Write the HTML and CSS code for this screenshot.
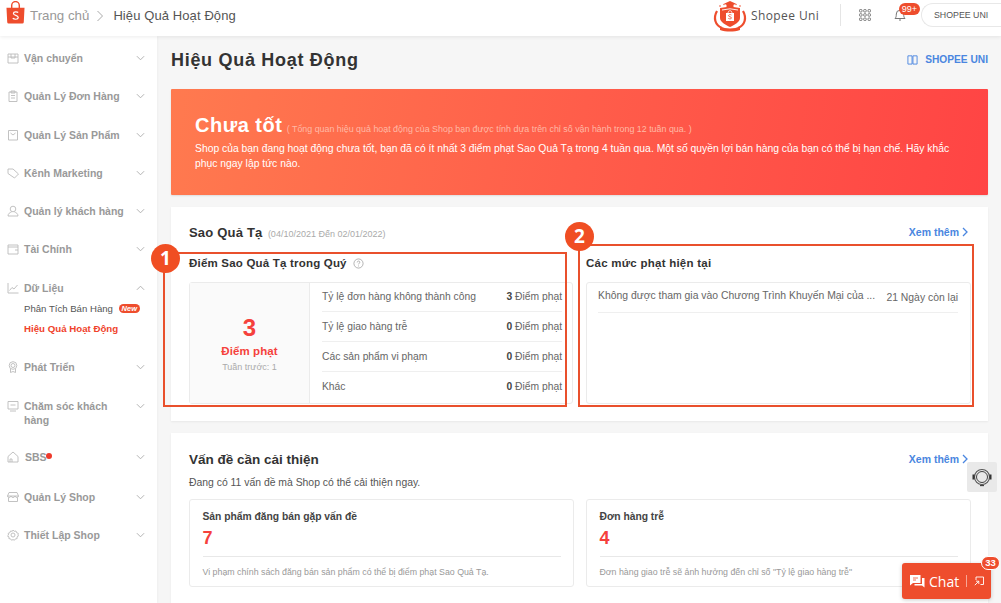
FILE: index.html
```html
<!DOCTYPE html>
<html lang="vi">
<head>
<meta charset="utf-8">
<title>Hiệu Quả Hoạt Động</title>
<link rel="stylesheet" href="styles.css">
</head>
<body>
<div class="app">
  <header class="topbar">
    <svg class="logo" viewBox="0 0 20 24"><path d="M.5 7h19l-.8 15.300a1.500 1.500 0 0 1-1.500 1.400H2.800a1.500 1.500 0 0 1-1.500-1.400z" fill="#ee4d2d"/><path d="M6 8V4.500a4 4 0 0 1 8 0V8" fill="none" stroke="#ee4d2d" stroke-width="1.500"/><path d="M12.800 12c-.8-.9-4.800-1.400-5 .9-.2 2.600 5.300 1.700 5.100 4.500-.2 2.300-4.400 2-5.800.7" fill="none" stroke="#fff" stroke-width="1.300"/></svg>
    <span class="crumb-home">Trang chủ</span>
    <svg class="crumb-sep" viewBox="0 0 8 12"><path d="M1.500 1l5 5-5 5" fill="none" stroke="#aaa" stroke-width="1"/></svg>
    <span class="crumb-now">Hiệu Quả Hoạt Động</span>
    <div class="top-right">
      <svg class="uni-logo" viewBox="0 0 36 32">
        <path d="M5 11c-4 7-2 14 5 17M31 11c4 7 2 14-5 17" fill="none" stroke="#ee4d2d" stroke-width="2.200"/>
        <path d="M18 1l6 2.800-6 2.800-6-2.800z" fill="#ee4d2d"/>
        <path d="M14.500 5v2h7V5" fill="#ee4d2d"/>
        <circle cx="8" cy="6" r=".8" fill="#ee4d2d"/><circle cx="12" cy="4.500" r=".7" fill="#ee4d2d"/><circle cx="24" cy="4.500" r=".7" fill="#ee4d2d"/><circle cx="28" cy="6" r=".8" fill="#ee4d2d"/>
        <path d="M8 8l10-1.500L28 8v10c0 4-5.500 7-10 9-4.500-2-10-5-10-9z" fill="#ee4d2d"/>
        <path d="M10 10l8-1.200 8 1.200" fill="none" stroke="#fff" stroke-width=".9"/>
        <path d="M14 13h8v8h-8z" fill="#fff"/>
        <path d="M16 13c0-3 4-3 4 0" fill="none" stroke="#fff" stroke-width=".8"/>
        <path d="M19.500 15c-1-.7-3-.5-3 .7 0 1.400 3 .8 3 2.200 0 1.200-2.200 1.200-3.200.5" fill="none" stroke="#ee4d2d" stroke-width=".8"/>
        <path d="M8 26.500c6 2.500 14 2.500 20 0v3.500c-6 2-14 2-20 0z" fill="#ee4d2d"/>
      </svg>
      <span class="uni-text">Shopee Uni</span>
      <span class="top-divider"></span>
      <svg class="grid-icon" viewBox="0 0 12 12"><g fill="none" stroke="#777" stroke-width="1"><rect x=".5" y=".5" width="2.500" height="2.500" rx=".8"/><rect x="4.700" y=".5" width="2.500" height="2.500" rx=".8"/><rect x="9" y=".5" width="2.500" height="2.500" rx=".8"/><rect x=".5" y="4.700" width="2.500" height="2.500" rx=".8"/><rect x="4.700" y="4.700" width="2.500" height="2.500" rx=".8"/><rect x="9" y="4.700" width="2.500" height="2.500" rx=".8"/><rect x=".5" y="9" width="2.500" height="2.500" rx=".8"/><rect x="4.700" y="9" width="2.500" height="2.500" rx=".8"/><rect x="9" y="9" width="2.500" height="2.500" rx=".8"/></g></svg>
      <div class="bell">
        <svg viewBox="0 0 12 13"><path d="M1 10c1-1 1.300-2 1.300-4.500a3.700 3.700 0 0 1 7.400 0C9.700 8 10 9 11 10zM5 11.500h2" fill="none" stroke="#777" stroke-width="1"/></svg>
        <span class="bell-badge">99+</span>
      </div>
      <span class="user-pill">SHOPEE UNI</span>
    </div>
  </header>

  <div class="body">
    <nav class="sidebar">
      <div class="nav-item">
        <svg class="nav-icon" viewBox="0 0 12 12"><path d="M1 2h10v9H1zM1 5h10M4 2v4h4V2" /></svg>
        <span class="nav-label">Vận chuyển</span>
        <svg class="chev" viewBox="0 0 10 6"><path d="M1 1l4 4 4-4"/></svg>
      </div>
      <div class="nav-item">
        <svg class="nav-icon" viewBox="0 0 12 12"><path d="M2 2h8v9.500H2zM4 1h4v2H4zM4 5.500h4M4 8h4"/></svg>
        <span class="nav-label">Quản Lý Đơn Hàng</span>
        <svg class="chev" viewBox="0 0 10 6"><path d="M1 1l4 4 4-4"/></svg>
      </div>
      <div class="nav-item">
        <svg class="nav-icon" viewBox="0 0 12 12"><path d="M1.500 1.500h9v9.500h-9zM3.500 4l2.500 2 2.500-2"/></svg>
        <span class="nav-label">Quản Lý Sản Phẩm</span>
        <svg class="chev" viewBox="0 0 10 6"><path d="M1 1l4 4 4-4"/></svg>
      </div>
      <div class="nav-item">
        <svg class="nav-icon" viewBox="0 0 12 12"><path d="M1 2h5l5.500 5-4 4L1 6.500zM3.500 4.200h.1"/></svg>
        <span class="nav-label">Kênh Marketing</span>
        <svg class="chev" viewBox="0 0 10 6"><path d="M1 1l4 4 4-4"/></svg>
      </div>
      <div class="nav-item">
        <svg class="nav-icon" viewBox="0 0 12 12"><circle cx="6" cy="4" r="2.800"/><path d="M1 11c0-2.500 2-3.500 3.500-4M11 11c0-2.500-2-3.500-3.500-4M1 11h10"/></svg>
        <span class="nav-label">Quản lý khách hàng</span>
        <svg class="chev" viewBox="0 0 10 6"><path d="M1 1l4 4 4-4"/></svg>
      </div>
      <div class="nav-item">
        <svg class="nav-icon" viewBox="0 0 12 12"><path d="M1 2h10v9H1zM1 4h10M8 7h3"/></svg>
        <span class="nav-label">Tài Chính</span>
        <svg class="chev" viewBox="0 0 10 6"><path d="M1 1l4 4 4-4"/></svg>
      </div>
      <div class="nav-item nav-open">
        <svg class="nav-icon" viewBox="0 0 12 12"><path d="M1 1v10h10.500M2.500 8.500L5 5.500l2 1.500L10.500 3"/></svg>
        <span class="nav-label">Dữ Liệu</span>
        <svg class="chev" viewBox="0 0 10 6"><path d="M1 5l4-4 4 4"/></svg>
      </div>
      <div class="sub-item">Phân Tích Bán Hàng <span class="new-tag">New</span></div>
      <div class="sub-item sub-active">Hiệu Quả Hoạt Động</div>
      <div class="nav-item nav-after-sub">
        <svg class="nav-icon" viewBox="0 0 12 12"><circle cx="6" cy="4.500" r="3.800"/><circle cx="6" cy="4.500" r="2"/><path d="M3.500 8v3.500L6 10.500l2.500 1V8"/></svg>
        <span class="nav-label">Phát Triển</span>
        <svg class="chev" viewBox="0 0 10 6"><path d="M1 1l4 4 4-4"/></svg>
      </div>
      <div class="nav-item nav-tall">
        <svg class="nav-icon" viewBox="0 0 12 12"><path d="M1 1.500h10v7.500H1zM3 11h6M3.500 5h5"/></svg>
        <span class="nav-label">Chăm sóc khách hàng</span>
        <svg class="chev" viewBox="0 0 10 6"><path d="M1 1l4 4 4-4"/></svg>
      </div>
      <div class="nav-item nav-sbs-row">
        <svg class="nav-icon" viewBox="0 0 12 12"><path d="M1 5.500L6 1l5 4.500V11H1zM3 11V8h2v3"/></svg>
        <span class="nav-label nav-sbs">SBS<i class="dot"></i></span>
        <svg class="chev" viewBox="0 0 10 6"><path d="M1 1l4 4 4-4"/></svg>
      </div>
      <div class="nav-item">
        <svg class="nav-icon" viewBox="0 0 12 12"><path d="M2 1.500h8L11.500 5h-11zM.5 5c0 2 3 2 3.500 0 .5 2 3.500 2 4 0 .5 2 3.500 2 3.500 0M1.500 7v3.500h9V7"/></svg>
        <span class="nav-label">Quản Lý Shop</span>
        <svg class="chev" viewBox="0 0 10 6"><path d="M1 1l4 4 4-4"/></svg>
      </div>
      <div class="nav-item">
        <svg class="nav-icon" viewBox="0 0 12 12"><circle cx="6" cy="6" r="2"/><path d="M6 1l1.200 1.300 1.800-.3.600 1.700 1.700.6-.3 1.800L11.500 7l-1.500.9.100 1.700-1.700.3-.9 1.300L6 10.600l-1.500.6-.9-1.300-1.700-.3.100-1.700L.5 7l1-.9-.3-1.800 1.700-.6.600-1.700 1.800.3z"/></svg>
        <span class="nav-label">Thiết Lập Shop</span>
        <svg class="chev" viewBox="0 0 10 6"><path d="M1 1l4 4 4-4"/></svg>
      </div>
    </nav>

    <main class="main">
      <div class="page-head">
        <h1 class="page-title">Hiệu Quả Hoạt Động</h1>
        <a class="uni-link">
          <svg viewBox="0 0 12 12"><path d="M1 2h4.500v9H1zM6.500 2H11v9H6.500z" fill="none" stroke="#4a86e0" stroke-width="1"/></svg>
          SHOPEE UNI
        </a>
      </div>

      <section class="banner">
        <div class="banner-head"><span class="banner-title">Chưa tốt</span> <span class="banner-note">( Tổng quan hiệu quả hoạt động của Shop bạn được tính dựa trên chỉ số vận hành trong 12 tuần qua. )</span></div>
        <p class="banner-text">Shop của bạn đang hoạt động chưa tốt, bạn đã có ít nhất 3 điểm phạt Sao Quả Tạ trong 4 tuần qua. Một số quyền lợi bán hàng của bạn có thể bị hạn chế. Hãy khắc phục ngay lập tức nào.</p>
      </section>

      <section class="card card-stars">
        <div class="card-head">
          <div><span class="card-title">Sao Quả Tạ</span> <span class="card-date">(04/10/2021 Đến 02/01/2022)</span></div>
          <a class="more">Xem thêm <svg viewBox="0 0 6 10"><path d="M1 1l4 4-4 4" fill="none" stroke="#4a86e0" stroke-width="1.300"/></svg></a>
        </div>
        <div class="two-col">
          <div class="col">
            <h3 class="sub-title">Điểm Sao Quả Tạ trong Quý <svg class="help" viewBox="0 0 12 12"><circle cx="6" cy="6" r="5" fill="none" stroke="#999" stroke-width=".8"/><path d="M4.600 4.800c0-2 2.900-1.800 2.900-.2 0 1-1.500 1.200-1.500 2.400M6 8.200v1" fill="none" stroke="#999" stroke-width=".8"/></svg></h3>
            <div class="score-box">
              <div class="score-panel">
                <div class="score-num">3</div>
                <div class="score-label">Điểm phạt</div>
                <div class="score-prev">Tuần trước: 1</div>
              </div>
              <div class="score-rows">
                <div class="score-row"><span>Tỷ lệ đơn hàng không thành công</span><span class="pts"><b>3</b> Điểm phạt</span></div>
                <div class="score-row"><span>Tỷ lệ giao hàng trễ</span><span class="pts"><b>0</b> Điểm phạt</span></div>
                <div class="score-row"><span>Các sản phẩm vi phạm</span><span class="pts"><b>0</b> Điểm phạt</span></div>
                <div class="score-row"><span>Khác</span><span class="pts"><b>0</b> Điểm phạt</span></div>
              </div>
            </div>
          </div>
          <div class="col">
            <h3 class="sub-title sub-title-right">Các mức phạt hiện tại</h3>
            <div class="penalty-box">
              <div class="penalty-row"><span class="penalty-name">Không được tham gia vào Chương Trình Khuyến Mại của ...</span><span class="penalty-days">21 Ngày còn lại</span></div>
            </div>
          </div>
        </div>
      </section>

      <section class="card card-issues">
        <div class="card-head issues-head">
          <span class="issues-title">Vấn đề cần cải thiện</span>
          <a class="more">Xem thêm <svg viewBox="0 0 6 10"><path d="M1 1l4 4-4 4" fill="none" stroke="#4a86e0" stroke-width="1.300"/></svg></a>
        </div>
        <p class="issues-sub">Đang có 11 vấn đề mà Shop có thể cải thiện ngay.</p>
        <div class="issue-grid">
          <div class="issue">
            <div class="issue-title">Sản phẩm đăng bán gặp vấn đề</div>
            <div class="issue-num">7</div>
            <div class="issue-desc">Vi phạm chính sách đăng bán sản phẩm có thể bị điểm phạt Sao Quả Tạ.</div>
          </div>
          <div class="issue">
            <div class="issue-title">Đơn hàng trễ</div>
            <div class="issue-num">4</div>
            <div class="issue-desc">Đơn hàng giao trễ sẽ ảnh hưởng đến chỉ số "Tỷ lệ giao hàng trễ"</div>
          </div>
        </div>
      </section>
    </main>
  </div>

  <div class="mark mark-one"></div>
  <div class="mark mark-two"></div>
  <span class="mark-num mark-num-one">1</span>
  <span class="mark-num mark-num-two">2</span>

  <div class="support">
    <svg viewBox="0 0 22 22"><circle cx="11" cy="11" r="7.500" fill="none" stroke="#555" stroke-width="1.100"/><path d="M5.500 11a5.500 5.500 0 0 1 11 0M16.500 11a5.500 5.500 0 0 1-11 0" fill="none" stroke="#444" stroke-width="1"/><path d="M2.500 8.500v5M19.500 8.500v5" stroke="#333" stroke-width="2"/><path d="M9 19.500h4" stroke="#444" stroke-width="1.300"/></svg>
  </div>
  <div class="chat">
    <svg class="chat-icon" viewBox="0 0 15 14"><path d="M0 1h10.500v8H3L0 11.500z" fill="#fff"/><path d="M3 4h5M3 6h3" stroke="#ee4d2d" stroke-width=".8"/><path d="M12 4h2.500v9.500L12 11.500H4.500V10H12z" fill="#fff"/></svg>
    <span class="chat-text">Chat</span>
    <span class="chat-sep"></span>
    <svg class="chat-min" viewBox="0 0 10 10"><path d="M2 4V1h7.500v7.500H6.500M.8 9.200l4-4M2 5.200h2.800V8" fill="none" stroke="#fff" stroke-width=".9"/></svg>
    <span class="chat-badge">33</span>
  </div>
</div>
</body>
</html>
```
FILE: styles.css
```css
* { box-sizing: border-box; }
html, body { margin: 0; height: 100%; overflow: hidden; }
body { font-family: "Liberation Sans", Arial, sans-serif; color: #333; background: #f6f6f6; font-size: 12px; }
p, h1, h3 { margin: 0; }
.app { position: relative; width: 1001px; height: 603px; overflow: hidden; }

.topbar { height: 36px; background: #fff; display: flex; align-items: center; padding-left: 6px; box-shadow: 0 1px 4px rgba(0,0,0,.08); position: relative; z-index: 2; }
.logo { width: 19px; height: 23px; margin-top: -11px; }
.crumb-home { margin-left: 5px; font-size: 13.300px; color: #999; margin-top: -5px; }
.crumb-sep { width: 8px; height: 12px; margin: -5px 9px 0 7px; }
.crumb-now { font-size: 13px; color: #555; margin-top: -5px; letter-spacing: .1px; }
.top-right { margin-left: auto; display: flex; align-items: center; margin-top: -6px; }
.uni-logo { width: 36px; height: 32px; margin-right: 3px; margin-top: 2px; }
.uni-text { font-family: "Open Sans", sans-serif; font-size: 12px; letter-spacing: .4px; color: #555; width: 66px; white-space: nowrap; }
.top-divider { width: 1px; height: 22px; background: #e5e5e5; margin: 0 18px 0 23px; }
.grid-icon { width: 12px; height: 12px; margin-right: 23px; }
.bell { position: relative; width: 12px; height: 14px; margin-right: 15px; }
.bell svg { width: 12px; height: 14px; display: block; }
.bell-badge { position: absolute; left: 5px; top: -5px; width: 21px; height: 12px; border-radius: 7px; background: #ee4d2d; color: #fff; font-size: 9px; line-height: 12px; text-align: center; }
.user-pill { width: 80px; height: 24px; border: 1px solid #e8e8e8; border-right: 0; border-radius: 12px 0 0 12px; font-size: 8.800px; line-height: 22px; color: #555; padding-left: 12px; background: #fff; margin-top: 0; }

.body { display: flex; height: 567px; }
.sidebar { width: 157px; background: #fff; padding: 14px 0 0 7px; flex: none; box-shadow: 1px 0 2px rgba(0,0,0,.03); }
.nav-item { display: flex; align-items: flex-start; height: 18px; margin-bottom: 20.300px; position: relative; font-size: 10.500px; font-weight: 700; color: #999; line-height: 16px; }
.nav-icon { width: 12px; height: 12px; flex: none; margin: 2px 5px 0 0; fill: none; stroke: #bbb; stroke-width: .9; }
.nav-label { width: 106px; }
.chev { position: absolute; left: 129px; top: 5px; width: 9px; height: 6px; fill: none; stroke: #aaa; stroke-width: 1; }
.nav-open { margin-bottom: 4px; }
.sub-item { margin-left: 17px; font-size: 9.600px; line-height: 14px; color: #555; height: 20.500px; white-space: nowrap; }
.sub-active { font-size: 9.700px; font-weight: 700; color: #f0432c; }
.new-tag { display: inline-block; vertical-align: 1px; background: #ee4d2d; color: #fff; font-size: 7.500px; font-style: italic; font-weight: 700; line-height: 9px; height: 9px; padding: 0 3px; border-radius: 5px; margin-left: 3px; }
.nav-after-sub { margin-top: 16px; margin-bottom: 23.300px; }
.nav-tall { height: 32px; margin-bottom: 17px; line-height: 13.500px; }
.nav-tall .nav-icon { margin-top: 0; }
.nav-tall .chev { top: 3px; }
.nav-sbs-row { margin-bottom: 22px; }
.nav-sbs { position: relative; padding-left: 1px; }
.dot { position: absolute; left: 22px; top: 4px; width: 6px; height: 6px; border-radius: 50%; background: #ee3a2b; }

.main { flex: 1; padding: 11px 13px 0 14px; min-width: 0; }
.page-head { display: flex; justify-content: space-between; align-items: center; height: 26px; margin-bottom: 16px; }
.page-title { font-size: 18px; font-weight: 700; color: #333; letter-spacing: .7px; line-height: 26px; }
.uni-link { display: flex; align-items: center; gap: 7px; color: #4a86e0; font-size: 10.200px; font-weight: 700; margin-top: -2px; }
.uni-link svg { width: 11px; height: 11px; }

.banner { height: 106px; background: linear-gradient(100deg, #ff7a4f 0%, #ff5d4a 50%, #ff4444 100%); color: #fff; padding: 24px 24px 0 24px; border-radius: 1px; box-shadow: 0 1px 2px rgba(0,0,0,.1); }
.banner-head { height: 26px; line-height: 24px; white-space: nowrap; }
.banner-title { font-size: 20px; font-weight: 700; letter-spacing: .5px; }
.banner-note { font-size: 8.900px; color: #ffb9a6; margin-left: 1px; }
.banner-text { font-size: 10.350px; line-height: 14.500px; margin-top: 3px; }

.card { background: #fff; margin-top: 12px; box-shadow: 0 1px 2px rgba(0,0,0,.06); padding: 0 17px 0 18px; }
.card-stars { height: 214px; }
.card-head { display: flex; justify-content: space-between; align-items: center; height: 18px; }
.card-stars .card-head { padding-top: 16px; height: 34px; }
.card-title { font-size: 13px; font-weight: 700; color: #333; letter-spacing: .2px; }
.card-date { font-size: 9px; color: #aaa; margin-left: 2px; }
.more { display: inline-flex; align-items: center; gap: 3px; color: #4a86e0; font-size: 10.500px; font-weight: 700; margin-right: 3px; }
.more svg { width: 6px; height: 10px; }
.two-col { display: grid; grid-template-columns: 384px 385px; gap: 13px; margin-top: 12px; }
.sub-title { font-size: 11.500px; font-weight: 700; color: #333; letter-spacing: .2px; height: 20px; display: flex; align-items: center; gap: 6px; }
.sub-title-right { letter-spacing: .25px; }
.help { width: 11px; height: 11px; }
.score-box { display: flex; height: 122px; margin-top: 9px; border: 1px solid #ebebeb; border-radius: 3px; }
.score-panel { width: 120px; background: #fafafa; border-right: 1px solid #ebebeb; text-align: center; padding-top: 33px; flex: none; }
.score-num { font-size: 24px; font-weight: 700; color: #f5413c; line-height: 24px; }
.score-label { font-size: 11.500px; font-weight: 700; color: #f5413c; line-height: 14px; margin-top: 4px; letter-spacing: .1px; }
.score-prev { font-size: 9px; color: #aaa; line-height: 12px; margin-top: 3px; }
.score-rows { flex: 1; padding: 0 10px 0 12px; margin-top: -.5px; }
.score-row { display: flex; justify-content: space-between; align-items: center; height: 29.700px; border-bottom: 1px solid #efefef; font-size: 10.300px; color: #666; white-space: nowrap; }
.score-row:last-child { border-bottom: 0; }
.pts { font-size: 10.300px; }
.pts b { color: #444; }
.penalty-box { height: 122px; margin-top: 9px; border: 1px solid #ebebeb; border-radius: 3px; padding: 0 12px 0 11px; }
.penalty-row { display: flex; justify-content: space-between; align-items: flex-start; height: 30px; padding-top: 6px; border-bottom: 1px solid #efefef; font-size: 10.400px; line-height: 13px; color: #666; }
.penalty-name { white-space: nowrap; }
.penalty-days { white-space: nowrap; margin-top: 2px; }

.card-issues { height: 180px; padding-top: 17px; }
.issues-title { font-size: 13.500px; font-weight: 700; color: #333; }
.issues-head { align-items: center; height: 18px; }
.issues-sub { font-size: 10.400px; color: #555; margin-top: 8px; line-height: 14px; }
.issue-grid { display: grid; grid-template-columns: 385px 385px; gap: 12px; margin-top: 9px; }
.issue { height: 88px; border: 1px solid #ebebeb; border-radius: 3px; padding: 10px 12px 0 12.500px; }
.issue-title { font-size: 10.300px; font-weight: 700; color: #444; line-height: 14px; }
.issue-num { font-size: 18px; font-weight: 700; color: #f5413c; line-height: 20px; margin-top: 4px; padding-bottom: 8px; border-bottom: 1px solid #e8e8e8; }
.issue-desc { font-size: 8.800px; color: #999; margin-top: 9px; line-height: 12px; white-space: nowrap; }

.mark { position: absolute; border: 2px solid #e9502c; pointer-events: none; z-index: 3; }
.mark-one { left: 163px; top: 252px; width: 404px; height: 155px; }
.mark-two { left: 578px; top: 244px; width: 396px; height: 163px; }
.mark-num { position: absolute; width: 29px; height: 29px; border-radius: 50%; background: #f04e23; color: #fff; font-family: "Open Sans", sans-serif; font-weight: 700; font-size: 19px; line-height: 28px; text-align: center; z-index: 4; }
.mark-num-one { left: 151px; top: 244px; }
.mark-num-two { left: 565px; top: 222px; }

.support { position: absolute; left: 967px; top: 462px; width: 30px; height: 30px; background: #e9e9e9; border-radius: 2px; display: flex; align-items: center; justify-content: center; z-index: 5; }
.support svg { width: 22px; height: 22px; }
.chat { position: absolute; left: 902px; top: 563px; width: 89px; height: 36px; background: #ee4d2d; border-radius: 3px; display: flex; align-items: center; padding-left: 8px; z-index: 5; box-shadow: 0 1px 4px rgba(0,0,0,.2); }
.chat-icon { width: 15px; height: 14px; margin-right: 4px; }
.chat-text { font-family: "Open Sans", sans-serif; color: #fff; font-size: 14px; font-weight: 500; }
.chat-sep { width: 1px; height: 12px; background: rgba(255,255,255,.5); margin: 0 7px; }
.chat-min { width: 10px; height: 10px; }
.chat-badge { position: absolute; right: -9px; top: -7px; width: 19px; height: 14px; background: #ee4d2d; border: 1px solid #fff; border-radius: 7px; color: #fff; font-size: 9.500px; font-weight: 700; line-height: 12px; text-align: center; }
```
